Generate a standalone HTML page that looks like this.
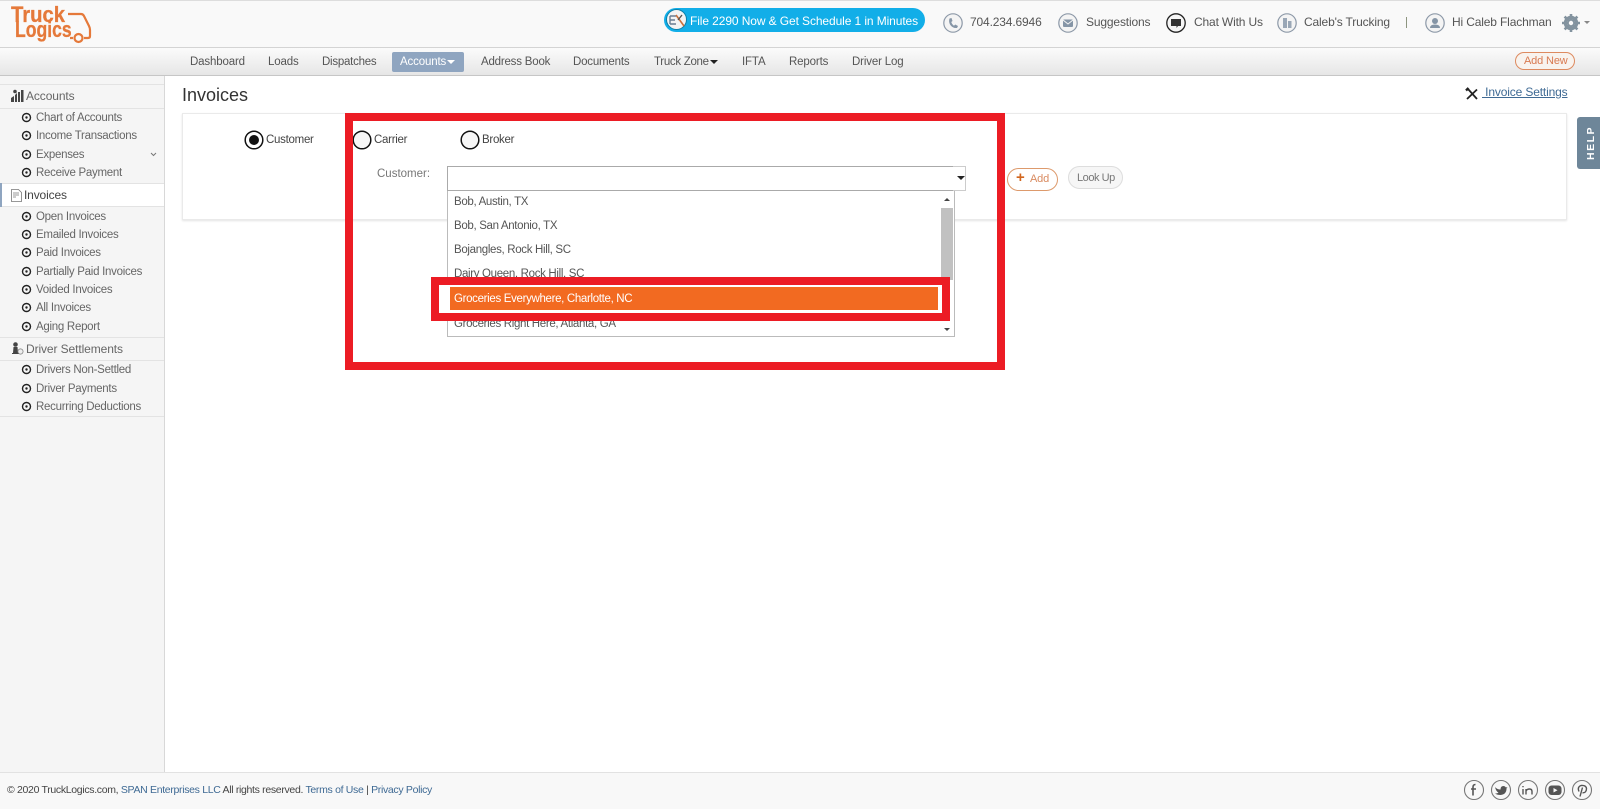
<!DOCTYPE html>
<html lang="en"><head><meta charset="utf-8"><title>Invoices</title>
<style>
html,body{margin:0;padding:0;background:#fff}
body{position:relative;width:1600px;height:809px;overflow:hidden;font-family:"Liberation Sans",sans-serif;font-size:11.5px;letter-spacing:-.15px;color:#555}
.a{position:absolute}
.t{position:absolute;white-space:nowrap;line-height:16px;height:16px;margin-top:1px}
svg{position:absolute;overflow:visible}
#hdr{left:0;top:0;width:1600px;height:48px;background:#f9f9f9;border-top:1px solid #ddd;box-sizing:border-box;border-bottom:1px solid #d4d4d4}
#nav{left:0;top:48px;width:1600px;height:28px;background:linear-gradient(#fbfbfb,#e6e6e6);border-bottom:1px solid #c6c6c6;box-sizing:border-box}
#side{left:0;top:76px;width:165px;height:696px;background:#f5f5f5;border-right:1px solid #d8d8d8;box-sizing:border-box}
.ln{position:absolute;left:0;width:164px;height:1px;background:#e3e3e3}
#foot{left:0;top:772px;width:1600px;height:37px;background:#f8f8f8;border-top:1px solid #e2e2e2;box-sizing:border-box}
.s{color:#666;letter-spacing:-.28px}
.top{color:#555;font-size:12px;margin-top:0}
.lnk{color:#3f6a94}
.li{color:#555;letter-spacing:-.33px}
.r{color:#444;letter-spacing:-.28px}
.logo{font-size:22px;font-weight:700;color:#e5793a;height:22px;line-height:22px;margin-top:0;letter-spacing:0;transform-origin:left center;-webkit-text-stroke:.3px #e5793a}
</style></head><body>

<div class="a" id="hdr"></div>
<div class="a" id="nav"></div>

<!-- logo -->
<div class="t logo" style="left:11px;top:4px;transform:scaleX(.92)">Truck</div>
<div class="t logo" style="left:15px;top:19px;transform:scaleX(.8)">Logics</div>
<svg style="left:0;top:0" width="100" height="47" fill="none" stroke="#e5793a" stroke-width="2.2"><path d="M68 14H81Q83 14 84 16L89 26Q90 28 90 30V36Q90 38 88 38H84M73 38H70"/><circle cx="78.500" cy="38" r="4"/></svg>

<!-- pill -->
<div class="a" style="left:664px;top:8px;width:261px;height:24px;border-radius:12px;background:#12aee8"></div>
<div class="a" style="left:666px;top:9px;width:21px;height:21px;border-radius:50%;background:#f4f4f4;border:1px solid #0c7fa8;box-sizing:border-box"></div>
<svg style="left:669px;top:12px" width="16" height="16"><path d="M1 4H7M1 8H6M1 12H7M1 4V12" stroke="#6a7d92" stroke-width="1.4" fill="none"/><path d="M7 3L15 14" stroke="#c9703c" stroke-width="1.6"/><path d="M13 3L9 8" stroke="#555" stroke-width="1.4"/></svg>
<div class="t" style="left:690px;top:12px;color:#fff;font-size:12px;letter-spacing:-.1px">File 2290 Now &amp; Get Schedule 1 in Minutes</div>

<!-- top links -->
<svg style="left:943px;top:13px" width="20" height="20"><circle cx="10" cy="10" r="9.2" fill="#f4f4f4" stroke="#8d99a8" stroke-width="1.2"/><path d="M6.5 5.5L8.5 5L9.5 8L8.3 9Q9 11.5 11 12.7L12.2 11.5L15 13L14 15Q9.500 15.500 7 11.500Q5.500 8.500 6.500 5.500Z" fill="#8595a6"/></svg>
<div class="t top" style="left:970px;top:14px">704.234.6946</div>
<svg style="left:1058px;top:13px" width="20" height="20"><circle cx="10" cy="10" r="9.2" fill="#f4f4f4" stroke="#8d99a8" stroke-width="1.2"/><rect x="5" y="6.500" width="10" height="7.500" rx="1" fill="#8595a6"/><path d="M5 7L10 11L15 7" stroke="#f4f4f4" fill="none"/></svg>
<div class="t top" style="left:1086px;top:14px">Suggestions</div>
<svg style="left:1166px;top:13px" width="20" height="20"><circle cx="10" cy="10" r="9.200" fill="#f6f6f6" stroke="#222" stroke-width="1.300"/><path d="M5 6H15V13H12L10.500 15V13H5Z" fill="#333"/></svg>
<div class="t top" style="left:1194px;top:14px">Chat With Us</div>
<svg style="left:1277px;top:13px" width="20" height="20"><circle cx="10" cy="10" r="9.200" fill="#f4f4f4" stroke="#8d99a8" stroke-width="1.200"/><path d="M6 15V5H10V15ZM11 15V8H14.500V15Z" fill="#9aa7b6"/></svg>
<div class="t top" style="left:1304px;top:14px">Caleb's Trucking</div>
<div class="a" style="left:1406px;top:17px;width:1px;height:11px;background:#8d9580"></div>
<svg style="left:1425px;top:13px" width="20" height="20"><circle cx="10" cy="10" r="9.200" fill="#f4f4f4" stroke="#8d99a8" stroke-width="1.200"/><circle cx="10" cy="8" r="3" fill="#8595a6"/><path d="M5 15Q5 11.500 10 11.500Q15 11.500 15 15Z" fill="#8595a6"/></svg>
<div class="t top" style="left:1452px;top:14px">Hi Caleb Flachman</div>
<svg style="left:1562px;top:14px" width="18" height="18"><circle cx="9" cy="9" r="5.500" fill="none" stroke="#83939f" stroke-width="3.500"/><path d="M9 0V18M0 9H18M2.600 2.600L15.400 15.400M15.400 2.600L2.600 15.400" stroke="#83939f" stroke-width="2.600"/><circle cx="9" cy="9" r="2.200" fill="#f9f9f9"/></svg>
<div class="a" style="left:1584px;top:21px;border:3px solid transparent;border-top-color:#888;border-bottom:0"></div>

<!-- nav -->
<div class="t" style="left:190px;top:53px">Dashboard</div>
<div class="t" style="left:268px;top:53px">Loads</div>
<div class="t" style="left:322px;top:53px;letter-spacing:-.25px">Dispatches</div>
<div class="a" style="left:392px;top:52px;width:72px;height:20px;background:#8fa5c0;border-radius:2px"></div>
<div class="t" style="left:400px;top:53px;color:#fff">Accounts</div>
<div class="a" style="left:447px;top:60px;border:4px solid transparent;border-top-color:#fff;border-bottom:0"></div>
<div class="t" style="left:481px;top:53px;letter-spacing:-.2px">Address Book</div>
<div class="t" style="left:573px;top:53px;letter-spacing:-.2px">Documents</div>
<div class="t" style="left:654px;top:53px;letter-spacing:-.3px">Truck Zone</div>
<div class="a" style="left:710px;top:60px;border:4px solid transparent;border-top-color:#222;border-bottom:0"></div>
<div class="t" style="left:742px;top:53px">IFTA</div>
<div class="t" style="left:789px;top:53px">Reports</div>
<div class="t" style="left:852px;top:53px">Driver Log</div>
<div class="a" style="left:1515px;top:52px;width:60px;height:18px;border:1px solid #dd8a5f;border-radius:10px;box-sizing:border-box;background:#f8f3ee"></div>
<div class="t" style="left:1524px;top:52px;color:#d97a50;font-size:11px">Add New</div>

<!-- sidebar -->
<div class="a" id="side"></div>
<div class="ln" style="top:84px"></div><div class="ln" style="top:108px"></div>
<svg style="left:11px;top:89px" width="13" height="13" fill="#444"><path d="M0 13V9L3 7V13ZM4 13V6L6 4V13ZM7 13V3H9V13ZM10 13V1H12.500V13Z"/><circle cx="4" cy="2.500" r="1.800"/></svg>
<div class="t s" style="left:26px;top:87px;font-size:12px;letter-spacing:-.1px">Accounts</div>

<svg style="left:21px;top:112px" width="10" height="300" fill="none" stroke="#222" stroke-width="1.400">
<g id="b"><circle cx="5.500" cy="5.500" r="4"/><circle cx="5.500" cy="5.500" r="1.200" fill="#222" stroke="none"/></g>
<use href="#b" y="18"/><use href="#b" y="37"/><use href="#b" y="55"/><use href="#b" y="99"/><use href="#b" y="117"/><use href="#b" y="135"/><use href="#b" y="154"/><use href="#b" y="172"/><use href="#b" y="190"/><use href="#b" y="209"/><use href="#b" y="252"/><use href="#b" y="271"/><use href="#b" y="289"/>
</svg>
<div class="t s" style="left:36px;top:109px">Chart of Accounts</div>
<div class="t s" style="left:36px;top:127px">Income Transactions</div>
<div class="t s" style="left:36px;top:146px">Expenses</div>
<svg style="left:150px;top:152px" width="7" height="5" fill="none" stroke="#777"><path d="M1 1L3.500 3.500L6 1"/></svg>
<div class="t s" style="left:36px;top:164px">Receive Payment</div>

<div class="a" style="left:0;top:183px;width:164px;height:24px;background:#fff;border-top:1px solid #e3e3e3;border-bottom:1px solid #e3e3e3;box-sizing:border-box"></div>
<div class="a" style="left:0;top:183px;width:2px;height:24px;background:#8fa5c0"></div>
<svg style="left:11px;top:189px" width="11" height="13" fill="none" stroke="#777" stroke-width=".8"><path d="M.5.500H7.500L10.500 3.500V12.500H.5ZM2 4H8M2 6H8M2 8H5"/></svg>
<div class="t" style="left:24px;top:186px;font-size:12px;color:#444">Invoices</div>

<div class="t s" style="left:36px;top:208px">Open Invoices</div>
<div class="t s" style="left:36px;top:226px">Emailed Invoices</div>
<div class="t s" style="left:36px;top:244px">Paid Invoices</div>
<div class="t s" style="left:36px;top:263px">Partially Paid Invoices</div>
<div class="t s" style="left:36px;top:281px">Voided Invoices</div>
<div class="t s" style="left:36px;top:299px">All Invoices</div>
<div class="t s" style="left:36px;top:318px">Aging Report</div>
<div class="ln" style="top:337px"></div><div class="ln" style="top:360px"></div>
<svg style="left:11px;top:342px" width="13" height="13" fill="#444"><circle cx="4.500" cy="2.500" r="2.300"/><path d="M2.500 5H6.500L7 11H8V12H1V11H2Z"/><circle cx="9.500" cy="9.500" r="2.600" fill="#eee" stroke="#777" stroke-width=".7"/></svg>
<div class="t s" style="left:26px;top:340px;font-size:12px;letter-spacing:-.1px">Driver Settlements</div>
<div class="t s" style="left:36px;top:361px">Drivers Non-Settled</div>
<div class="t s" style="left:36px;top:380px">Driver Payments</div>
<div class="t s" style="left:36px;top:398px">Recurring Deductions</div>
<div class="ln" style="top:416px"></div>

<!-- title -->
<div class="t" style="left:182px;top:85px;height:20px;line-height:20px;font-size:18px;letter-spacing:0;color:#333;margin-top:0">Invoices</div>
<svg style="left:1466px;top:88px" width="12" height="12" stroke="#222" stroke-width="1.800" fill="none"><path d="M1 11L11 1.500M2 1L11 11"/><path d="M0 2.500L2.500 0" stroke-width="2.300"/></svg>
<div class="t lnk" style="left:1482px;top:84px;text-decoration:underline;font-size:12px;margin-top:0">&nbsp;Invoice Settings</div>

<!-- card -->
<div class="a" style="left:182px;top:113px;width:1385px;height:107px;background:#fff;border:1px solid #eaeaea;box-shadow:0 1px 2px #e4e4e4;box-sizing:border-box"></div>

<!-- help -->
<div class="a" style="left:1577px;top:117px;width:23px;height:52px;background:#6e8699;border-radius:3px 0 0 3px"></div>
<div class="a" style="left:1579px;top:117px;width:23px;height:52px;display:flex;align-items:center;justify-content:center"><span style="transform:rotate(-90deg);color:#fff;font-weight:700;font-size:10.500px;letter-spacing:1.500px;white-space:nowrap">HELP</span></div>

<!-- radios -->
<svg style="left:244px;top:130px" width="20" height="20"><circle cx="10" cy="10" r="8.800" fill="#fff" stroke="#111" stroke-width="1.500"/><circle cx="10" cy="10" r="5" fill="#111"/></svg>
<div class="t r" style="left:266px;top:131px">Customer</div>
<svg style="left:352px;top:130px" width="20" height="20"><circle cx="10" cy="10" r="8.800" fill="#f6f6f6" stroke="#111" stroke-width="1.500"/></svg>
<div class="t r" style="left:374px;top:131px">Carrier</div>
<svg style="left:460px;top:130px" width="20" height="20"><circle cx="10" cy="10" r="8.800" fill="#f6f6f6" stroke="#111" stroke-width="1.500"/></svg>
<div class="t r" style="left:482px;top:131px">Broker</div>
<div class="t" style="left:377px;top:165px;color:#777;letter-spacing:0">Customer:</div>

<!-- combobox -->
<div class="a" style="left:447px;top:166px;width:519px;height:25px;background:#fff;border:1px solid #ccc;box-sizing:border-box"></div>
<div class="a" style="left:447px;top:166px;width:506px;height:25px;border:1px solid #aaa;border-right:0;box-sizing:border-box;background:#fff"></div>
<div class="a" style="left:957px;top:176px;border:4px solid transparent;border-top-color:#222;border-bottom:0"></div>

<!-- list -->
<div class="a" style="left:447px;top:191px;width:508px;height:146px;background:#fff;border:1px solid #bbb;border-top:0;box-sizing:border-box;overflow:hidden"></div>
<div class="t li" style="left:454px;top:193px">Bob, Austin, TX</div>
<div class="t li" style="left:454px;top:217px">Bob, San Antonio, TX</div>
<div class="t li" style="left:454px;top:241px">Bojangles, Rock Hill, SC</div>
<div class="t li" style="left:454px;top:265px">Dairy Queen, Rock Hill, SC</div>
<div class="t li" style="left:454px;top:315px">Groceries Right Here, Atlanta, GA</div>
<div class="a" style="left:941px;top:208px;width:12px;height:72px;background:#c1c1c1"></div>
<div class="a" style="left:944px;top:198px;border:3px solid transparent;border-bottom-color:#444;border-top:0"></div>
<div class="a" style="left:944px;top:328px;border:3px solid transparent;border-top-color:#444;border-bottom:0"></div>

<!-- annotations -->
<div class="a" style="left:345px;top:113px;width:660px;height:257px;border:8px solid #ec1c24;box-sizing:border-box"></div>
<div class="a" style="left:431px;top:277px;width:519px;height:44px;border:8px solid #ec1c24;box-sizing:border-box;background:#fff"></div>
<div class="a" style="left:450px;top:287px;width:488px;height:23px;background:#f26a21"></div>
<div class="t li" style="left:454px;top:290px;color:#fff">Groceries Everywhere, Charlotte, NC</div>

<!-- buttons -->
<div class="a" style="left:1007px;top:168px;width:51px;height:23px;border:1px solid #dd9a6c;border-radius:12px;box-sizing:border-box;background:#fff"></div>
<div class="t" style="left:1016px;top:169px;color:#d2661e;font-size:15px;font-weight:700">+</div>
<div class="t" style="left:1030px;top:170px;color:#d98a5f;font-size:11px">Add</div>
<div class="a" style="left:1068px;top:166px;width:55px;height:23px;border:1px solid #ddd;border-radius:12px;box-sizing:border-box;background:#f6f6f6"></div>
<div class="t" style="left:1077px;top:169px;color:#777;font-size:11px;letter-spacing:-.45px">Look Up</div>

<!-- footer -->
<div class="a" id="foot"></div>
<div class="t" style="left:7px;top:781px;color:#444;font-size:10.500px;letter-spacing:-.32px">© 2020 TruckLogics.com, <span class="lnk">SPAN Enterprises LLC</span> All rights reserved. <span class="lnk">Terms of Use</span> | <span class="lnk">Privacy Policy</span></div>
<svg style="left:1464px;top:780px" width="130" height="20" fill="none" stroke="#777" stroke-width="1.100">
<circle cx="10" cy="10" r="9.500"/><circle cx="37" cy="10" r="9.500"/><circle cx="64" cy="10" r="9.500"/><circle cx="91" cy="10" r="9.500"/><circle cx="118" cy="10" r="9.500"/>
<path d="M11.500 4.500Q9 4.500 9 7V15.500M7 9H12" stroke="#555" stroke-width="1.600"/>
<path d="M31 7Q33 9.500 36.500 9.500Q36.500 6 39.500 6Q41 6 42 7.500L43.500 7L42.500 8.500Q42.500 14.500 36.500 15Q33 15 31 13.500Q33.500 13.500 34.500 12.500Q32 11.500 31 7Z" fill="#555" stroke="none"/>
<path d="M59 9V14.500M59 6V7.300M62 14.500V9M62 11Q63 9 65.500 9Q68 9 68 11.500V14.500" stroke="#555" stroke-width="1.400"/>
<rect x="84.500" y="5.500" width="13" height="9.500" rx="3" fill="#555" stroke="none"/><path d="M89.500 8L93.500 10.200L89.500 12.500Z" fill="#f8f8f8" stroke="none"/>
<path d="M115 11.500Q113 7 117 5.500Q122 5 122.500 8.500Q122.500 13 118.500 12.800M118.500 7.500L116 16.500" stroke="#555" stroke-width="1.400"/>
</svg>
</body></html>
